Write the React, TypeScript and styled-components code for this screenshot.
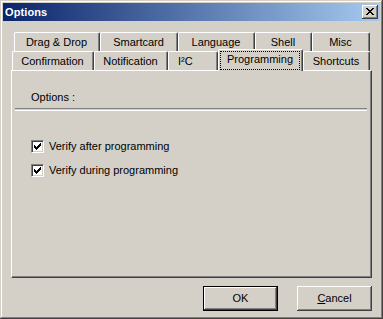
import React from "react";
import styled, { createGlobalStyle } from "styled-components";

const Global = createGlobalStyle`
  html, body { margin: 0; padding: 0; background: #d4d0c8; }
  body { font-family: "Liberation Sans", Arial, sans-serif; font-size: 11px; color: #000; }
`;

const Window = styled.div`
  box-sizing: border-box;
  width: 383px;
  height: 319px;
  padding: 3px;
  background: #d4d0c8;
  box-shadow: inset -1px -1px #404040, inset 1px 1px #d4d0c8, inset -2px -2px #808080, inset 2px 2px #ffffff;
  display: flex;
  flex-direction: column;
`;

const TitleBar = styled.div`
  height: 18px;
  flex: none;
  display: flex;
  align-items: center;
  justify-content: space-between;
  padding: 0 2px 0 2px;
  background: linear-gradient(to right, #0a246a, #a6caf0);
`;

const TitleText = styled.span`
  color: #fff;
  font-weight: bold;
  font-size: 11px;
  line-height: 13px;
  letter-spacing: 0.1px;
`;

const CloseButton = styled.div`
  box-sizing: border-box;
  width: 16px;
  height: 14px;
  background: #d4d0c8;
  box-shadow: inset -1px -1px #404040, inset 1px 1px #ffffff, inset -2px -2px #808080, inset 2px 2px #d4d0c8;
  display: flex;
  align-items: center;
  justify-content: center;
  padding: 0 1px 1px 0;
`;

const Body = styled.div`
  padding: 11px 8px 0 8px;
  display: flex;
  flex-direction: column;
`;

const TabRow = styled.div<{ $offset: number }>`
  display: flex;
  align-items: flex-start;
  height: 19px;
  margin-left: ${(p) => p.$offset}px;
`;

const Tab = styled.div<{ $w: number; $selected?: boolean; $indent?: number }>`
  box-sizing: border-box;
  flex: none;
  width: ${(p) => p.$w}px;
  height: ${(p) => (p.$selected ? 22 : 19)}px;
  margin-top: ${(p) => (p.$selected ? -2 : 0)}px;
  position: relative;
  z-index: ${(p) => (p.$selected ? 2 : 0)};
  background: #d4d0c8;
  border-left: 1px solid #ffffff;
  border-top: 1px solid #ffffff;
  border-right: 1px solid #404040;
  border-radius: 2px 2px 0 0;
  box-shadow: inset -1px 0 #808080;
  display: flex;
  align-items: center;
  justify-content: ${(p) => (p.$indent ? "flex-start" : "center")};
  padding: ${(p) =>
    p.$selected ? "0 1px 1px 0" : `1px 1px 0 ${p.$indent ? p.$indent : 0}px`};
  line-height: 13px;
  white-space: nowrap;
`;

const Focus = styled.div`
  box-sizing: border-box;
  align-self: stretch;
  flex: 1;
  margin: 1px 1px 0 1px;
  border: 1px dotted #000;
  display: flex;
  align-items: center;
  justify-content: center;
  padding-bottom: 2px;
`;

const Panel = styled.div`
  box-sizing: border-box;
  width: 361px;
  height: 208px;
  border-left: 1px solid #ffffff;
  border-top: 1px solid #ffffff;
  border-right: 1px solid #404040;
  border-bottom: 1px solid #404040;
  box-shadow: inset -1px -1px #808080;
  display: flex;
  flex-direction: column;
`;

const GroupTitle = styled.div`
  margin: 20px 0 0 19px;
  line-height: 13px;
  height: 13px;
`;

const Separator = styled.div`
  height: 1px;
  margin: 4px 4px 0 3px;
  border-top: 1px solid #808080;
  border-bottom: 1px solid #ffffff;
`;

const Options = styled.div`
  display: flex;
  flex-direction: column;
  gap: 11px;
  margin: 29px 0 0 19px;
`;

const CheckRow = styled.label`
  display: flex;
  align-items: center;
  gap: 5px;
  height: 13px;
  line-height: 13px;
`;

const CheckBox = styled.span`
  box-sizing: border-box;
  width: 13px;
  height: 13px;
  flex: none;
  background: #ffffff;
  border-left: 1px solid #808080;
  border-top: 1px solid #808080;
  border-right: 1px solid #ffffff;
  border-bottom: 1px solid #ffffff;
  box-shadow: inset 1px 1px #404040, inset -1px -1px #d4d0c8;
  display: flex;
  align-items: center;
  justify-content: center;
`;

const Buttons = styled.div`
  display: flex;
  justify-content: flex-end;
  gap: 19px;
  margin-top: 8px;
  padding-right: 8px;
`;

const Button = styled.div<{ $default?: boolean }>`
  box-sizing: border-box;
  width: 75px;
  height: 25px;
  background: #d4d0c8;
  border: ${(p) => (p.$default ? "1px solid #000" : "none")};
  box-shadow: ${(p) =>
    p.$default
      ? "inset -1px -1px #404040, inset 1px 1px #ffffff, inset -2px -2px #808080"
      : "inset -1px -1px #404040, inset 1px 1px #ffffff, inset -2px -2px #808080, inset 2px 2px #d4d0c8"};
  display: flex;
  align-items: center;
  justify-content: center;
  line-height: 13px;
  padding-bottom: 1px;
`;

const Check = () => (
  <svg width="7" height="7" viewBox="0 0 7 7" shapeRendering="crispEdges">
    <path
      fill="#000"
      d="M6 0h1v3h-1zM5 1h1v3h-1zM4 2h1v3h-1zM0 2h1v3h-1zM1 3h1v3h-1zM2 4h1v3h-1zM3 3h1v3h-1z"
    />
  </svg>
);

const CloseX = () => (
  <svg width="8" height="7" viewBox="0 0 8 7" shapeRendering="crispEdges">
    <path
      fill="#000"
      d="M0 0h2v1h-2zM6 0h2v1h-2zM1 1h2v1h-2zM5 1h2v1h-2zM2 2h4v1h-4zM3 3h2v1h-2zM2 4h4v1h-4zM1 5h2v1h-2zM5 5h2v1h-2zM0 6h2v1h-2zM6 6h2v1h-2z"
    />
  </svg>
);

type TabDef = { label: string; w: number; selected?: boolean; indent?: number };

const row1: TabDef[] = [
  { label: "Drag & Drop", w: 86 },
  { label: "Smartcard", w: 78 },
  { label: "Language", w: 77 },
  { label: "Shell", w: 57 },
  { label: "Misc", w: 58 },
];

const row2: TabDef[] = [
  { label: "Confirmation", w: 82 },
  { label: "Notification", w: 74 },
  { label: "I²C", w: 50, indent: 9 },
  { label: "Programming", w: 85, selected: true },
  { label: "Shortcuts", w: 67 },
];

export default function App() {
  return (
    <>
      <Global />
      <Window>
        <TitleBar>
          <TitleText>Options</TitleText>
          <CloseButton>
            <CloseX />
          </CloseButton>
        </TitleBar>
        <Body>
          <TabRow $offset={3}>
            {row1.map((t) => (
              <Tab key={t.label} $w={t.w}>
                {t.label}
              </Tab>
            ))}
          </TabRow>
          <TabRow $offset={1}>
            {row2.map((t) =>
              t.selected ? (
                <Tab key={t.label} $w={t.w} $selected>
                  <Focus>{t.label}</Focus>
                </Tab>
              ) : (
                <Tab key={t.label} $w={t.w} $indent={t.indent}>
                  {t.label}
                </Tab>
              )
            )}
          </TabRow>
          <Panel>
            <GroupTitle>Options :</GroupTitle>
            <Separator />
            <Options>
              <CheckRow>
                <CheckBox>
                  <Check />
                </CheckBox>
                Verify after programming
              </CheckRow>
              <CheckRow>
                <CheckBox>
                  <Check />
                </CheckBox>
                Verify during programming
              </CheckRow>
            </Options>
          </Panel>
        </Body>
        <Buttons>
          <Button $default>OK</Button>
          <Button>
            <span>
              <u>C</u>ancel
            </span>
          </Button>
        </Buttons>
      </Window>
    </>
  );
}
